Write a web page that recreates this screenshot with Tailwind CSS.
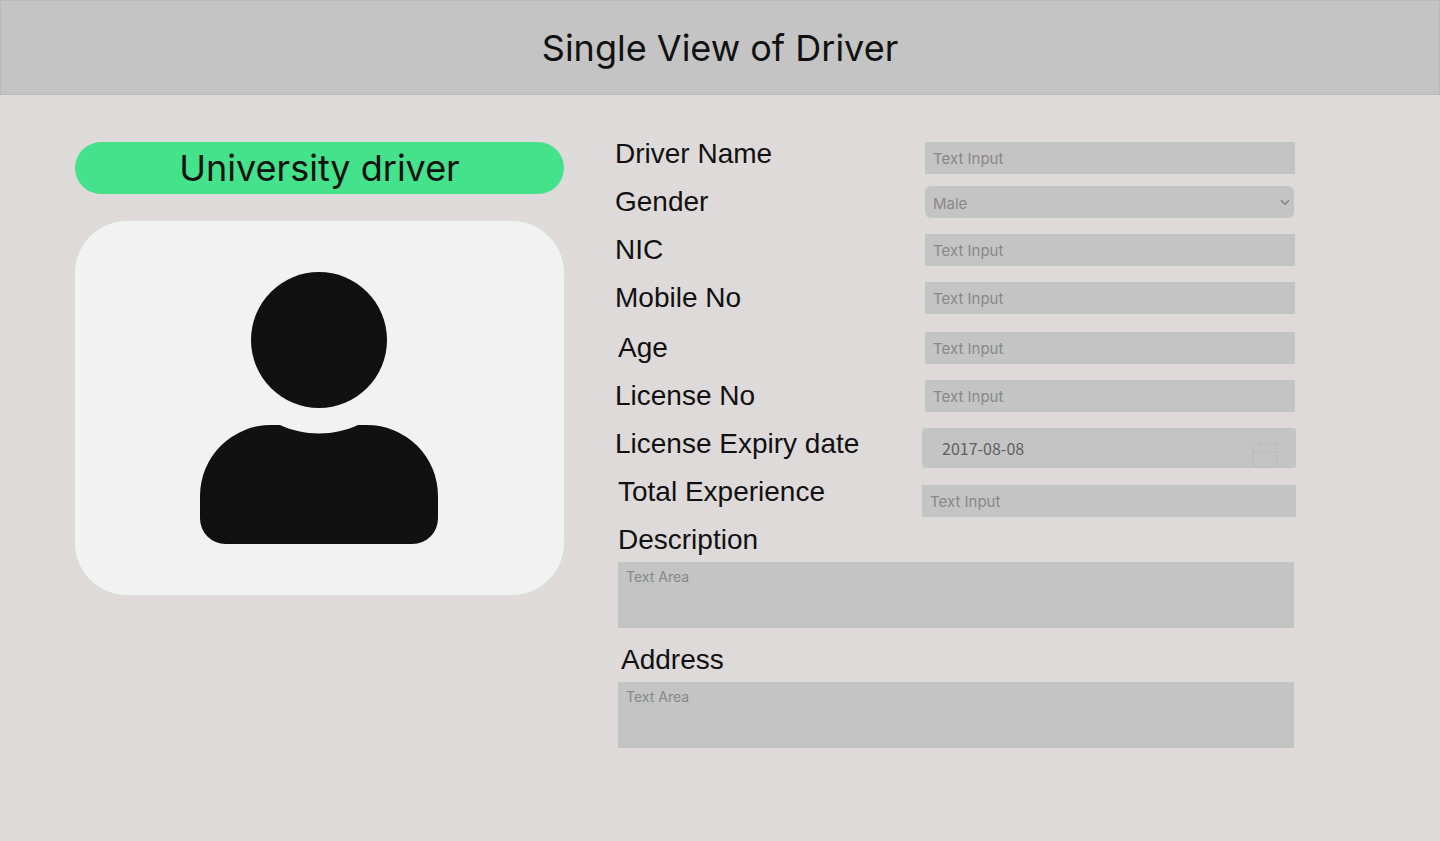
<!DOCTYPE html>
<html lang="en">
<head>
<meta charset="utf-8">
<meta name="viewport" content="width=device-width, initial-scale=1">
<title>Single View of Driver</title>
<script src="https://cdn.jsdelivr.net/npm/@tailwindcss/browser@4"></script>
</head>
<body class="min-h-screen bg-[#dedad9] font-['Liberation_Sans',Arial,sans-serif] text-[#111]">
<header class="flex h-[95px] items-center justify-center border border-[#b9b9b9] bg-[#c4c4c4]">
  <h1 class="font-[Inter,sans-serif] text-4xl">Single View of Driver</h1>
</header>
<main class="grid grid-cols-[489fr_681fr] items-start gap-[51px] pr-36 pl-[75px] pt-[43px] pb-12">
  <section class="pt-1">
    <h2 class="flex h-[52px] items-center justify-center rounded-full bg-[#43e28b] font-[Inter,sans-serif] text-4xl">University driver</h2>
    <div class="mt-[27px] flex h-[374px] items-center justify-center rounded-[52px] bg-[#f2f2f2]">
      <svg class="h-[272px] w-[239px]" viewBox="0 0 239 272" fill="#111" role="img" aria-label="Driver photo">
        <circle cx="119" cy="68" r="68"/>
        <path d="M71 153H80C92 158.500 105 161.500 119 161.500S146 158.500 158 153H167A71 71 0 0 1 238 224V246.500A25.500 25.500 0 0 1 212.500 272H25.500A25.500 25.500 0 0 1 0 246.500V224A71 71 0 0 1 71 153Z"/>
      </svg>
    </div>
  </section>
  <form class="text-[28px] leading-8">
    <div class="mb-3 flex items-start">
      <label for="name" class="w-[310px]">Driver Name</label>
      <input id="name" type="text" placeholder="Text Input" class="mt-1 mr-px h-8 min-w-0 flex-1 bg-[#c4c4c4] px-2 pt-0.5 font-[Inter,sans-serif] text-[15px] placeholder:text-[#888]">
    </div>
    <div class="mb-4 flex items-start">
      <label for="gender" class="w-[310px]">Gender</label>
      <div class="relative mr-0.5 min-w-0 flex-1">
        <select id="gender" class="block h-8 w-full appearance-none rounded-md bg-[#c4c4c4] px-2 pt-0.5 font-[Inter,sans-serif] text-[15px] text-[#888]"><option>Male</option><option>Female</option></select>
        <svg class="pointer-events-none absolute top-3 right-1 h-2 w-[10px]" viewBox="0 0 10 8" fill="none" stroke="#828282" stroke-width="1.500"><path d="M1 2.300L5 6.300L9 2.300"/></svg>
      </div>
    </div>
    <div class="mb-4 flex items-start">
      <label for="nic" class="w-[310px]">NIC</label>
      <input id="nic" type="text" placeholder="Text Input" class="mr-px h-8 min-w-0 flex-1 bg-[#c4c4c4] px-2 pt-0.5 font-[Inter,sans-serif] text-[15px] placeholder:text-[#888]">
    </div>
    <div class="mb-[18px] flex items-start">
      <label for="mobile" class="w-[310px]">Mobile No</label>
      <input id="mobile" type="text" placeholder="Text Input" class="mr-px h-8 min-w-0 flex-1 bg-[#c4c4c4] px-2 pt-0.5 font-[Inter,sans-serif] text-[15px] placeholder:text-[#888]">
    </div>
    <div class="mb-4 flex items-start">
      <label for="age" class="w-[310px] pl-[3px]">Age</label>
      <input id="age" type="text" placeholder="Text Input" class="mr-px h-8 min-w-0 flex-1 bg-[#c4c4c4] px-2 pt-0.5 font-[Inter,sans-serif] text-[15px] placeholder:text-[#888]">
    </div>
    <div class="mb-4 flex items-start">
      <label for="license" class="w-[310px]">License No</label>
      <input id="license" type="text" placeholder="Text Input" class="mr-px h-8 min-w-0 flex-1 bg-[#c4c4c4] px-2 pt-0.5 font-[Inter,sans-serif] text-[15px] placeholder:text-[#888]">
    </div>
    <div class="mb-2 flex items-start">
      <label for="expiry" class="w-[307px]">License Expiry date</label>
      <div class="relative min-w-0 flex-1">
        <input id="expiry" type="text" value="2017-08-08" class="block h-10 w-full rounded-[3px] bg-[#c4c4c4] px-5 font-['Noto_Sans_CJK_SC',sans-serif] text-base text-[#5f5f5f]">
        <svg class="pointer-events-none absolute right-[18px] bottom-0 h-7 w-[26px]" viewBox="0 0 26 28" fill="none" stroke="#c0c0c0" stroke-width="2"><path d="M1 4H25V27H1ZM1 12H25M7.500 1V7M18.500 1V7"/></svg>
      </div>
    </div>
    <div class="mb-[7px] flex items-start">
      <label for="experience" class="w-[307px] pl-[3px]">Total Experience</label>
      <input id="experience" type="text" placeholder="Text Input" class="mt-[9px] h-8 min-w-0 flex-1 bg-[#c4c4c4] px-2 pt-0.5 font-[Inter,sans-serif] text-[15px] placeholder:text-[#888]">
    </div>
    <div class="mb-4 mr-0.5 pl-[3px]">
      <label for="description" class="block">Description</label>
      <textarea id="description" placeholder="Text Area" class="mt-1.5 block h-[66px] w-full resize-none bg-[#c4c4c4] px-2 py-1 font-[Inter,sans-serif] text-sm leading-[22px] placeholder:text-[#888]"></textarea>
    </div>
    <div class="mr-0.5 pl-[3px]">
      <label for="address" class="block pl-[3px]">Address</label>
      <textarea id="address" placeholder="Text Area" class="mt-1.5 block h-[66px] w-full resize-none bg-[#c4c4c4] px-2 py-1 font-[Inter,sans-serif] text-sm leading-[22px] placeholder:text-[#888]"></textarea>
    </div>
  </form>
</main>
</body>
</html>
